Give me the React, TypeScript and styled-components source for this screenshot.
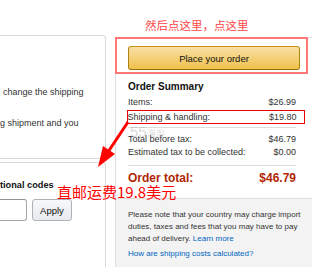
import React from "react";
import styled, { createGlobalStyle } from "styled-components";

const Global = createGlobalStyle`
  html, body { margin: 0; padding: 0; background: #fff; }
  body {
    width: 312px;
    height: 267px;
    overflow: hidden;
    font-family: "Liberation Sans", Arial, sans-serif;
    color: #111;
  }
  #root { width: 312px; height: 267px; }
`;

const Page = styled.div`
  position: relative;
  width: 312px;
  height: 267px;
  overflow: hidden;
  background: #fff;
`;

const TopNote = styled.div`
  height: 35px;
  box-sizing: border-box;
  padding: 17px 0 0 145px;
  font-family: "Noto Sans CJK SC", sans-serif;
  font-size: 11.5px;
  line-height: 16px;
  color: #f44;
  white-space: nowrap;
`;

const Columns = styled.div`
  display: flex;
  align-items: flex-start;
  gap: 9px;
`;

const LeftCol = styled.div`
  width: 106px;
  flex: none;
  display: flex;
  flex-direction: column;
  gap: 3px;
`;

const Panel = styled.div<{ $open?: boolean }>`
  box-sizing: border-box;
  border: 1px solid #d5dbdb;
  border-left: none;
  border-radius: ${(p) => (p.$open ? "0 4px 0 0" : "0 4px 4px 0")};
  ${(p) => (p.$open ? "border-bottom: none;" : "")}
  font-size: 9px;
  color: #333;
  white-space: nowrap;
  overflow: hidden;
`;

const InfoPanel = styled(Panel)`
  height: 124px;
  padding-top: 49px;
`;

const Para = styled.p<{ $indent?: number }>`
  margin: 0 0 16px;
  padding-left: ${(p) => p.$indent ?? 0}px;
  line-height: 15px;
`;

const CodePanel = styled(Panel)`
  height: 120px;
  padding-top: 16px;
`;

const Label = styled.div`
  font-weight: bold;
  font-size: 9.2px;
  line-height: 12px;
  color: #111;
`;

const CodeRow = styled.div`
  display: flex;
  gap: 5px;
  margin-top: 8px;
`;

const CodeInput = styled.div`
  width: 27px;
  height: 22px;
  box-sizing: border-box;
  border: 1px solid #a6a6a6;
  border-top-color: #949494;
  border-left: none;
  border-radius: 0 3px 3px 0;
  background: #fff;
`;

const ApplyButton = styled.button`
  width: 40px;
  height: 22px;
  box-sizing: border-box;
  padding: 0;
  border: 1px solid #adb1b8;
  border-radius: 3px;
  background: linear-gradient(#f7f8fa, #e7e9ec);
  font-family: "Liberation Sans", Arial, sans-serif;
  font-size: 9.5px;
  color: #111;
`;

const RightCol = styled.div`
  width: 205px;
  flex: none;
  margin-top: 2px;
  box-sizing: border-box;
  border: 1px solid #ddd;
  border-right: none;
  border-bottom: none;
  border-radius: 4px 0 0 0;
`;

const ButtonBox = styled.div`
  margin: -1px 0 0 -1px;
  width: 193px;
  box-sizing: border-box;
  border: 2px solid #f77;
  padding: 7px 0 2px 11px;
`;

const PlaceButton = styled.button`
  display: block;
  width: 172px;
  height: 24px;
  box-sizing: border-box;
  border: 1px solid;
  border-color: #c89411 #b0820f #99710d;
  border-radius: 3px;
  background: linear-gradient(#f7dfa5, #f0c14b);
  font-family: "Liberation Sans", Arial, sans-serif;
  font-size: 9.5px;
  color: #111;
  padding: 0;
`;

const Summary = styled.div`
  width: 168px;
  padding: 6px 0 12px 12px;
`;

const Title = styled.div`
  font-weight: bold;
  font-size: 10px;
  line-height: 14px;
  color: #111;
  margin-bottom: 2px;
`;

const Row = styled.div<{ $boxed?: boolean }>`
  display: flex;
  justify-content: space-between;
  font-size: 9px;
  line-height: ${(p) => (p.$boxed ? "12px" : "13px")};
  color: #333;
  white-space: nowrap;
  ${(p) =>
    p.$boxed
      ? `
    border: 1.5px solid #e00;
    margin: 1px -9px 0 -1.5px;
    padding: 0 7.5px 0 0;
  `
      : ""}
`;

const Divider = styled.div<{ $top: number; $bottom: number }>`
  height: 1px;
  background: #ddd;
  margin: ${(p) => p.$top}px 0 ${(p) => p.$bottom}px;
`;

const TotalRow = styled.div`
  display: flex;
  justify-content: space-between;
  font-weight: bold;
  font-size: 12px;
  line-height: 16px;
  color: #b12704;
`;

const NoteBand = styled.div`
  background: #f3f3f3;
  border-top: 1px solid #ddd;
  padding: 10px 0 12px 12px;
  font-size: 8px;
  line-height: 12px;
  color: #333;
  white-space: nowrap;
`;

const Link = styled.span`
  color: #0066c0;
`;

const LinkLine = styled.div`
  margin-top: 3px;
  color: #0066c0;
`;

const Watermark = styled.div`
  position: absolute;
  left: 130px;
  top: 124px;
  display: flex;
  align-items: baseline;
  font-family: "Noto Sans CJK SC", sans-serif;
  line-height: 16px;
  color: rgba(160, 160, 160, 0.4);
  pointer-events: none;
`;

const WatermarkNum = styled.span`
  font-family: "Liberation Sans", Arial, sans-serif;
  font-size: 15px;
`;

const WatermarkText = styled.span`
  font-size: 9px;
`;

const Callout = styled.div`
  position: absolute;
  left: 57px;
  top: 183px;
  font-family: "Noto Sans CJK SC", sans-serif;
  font-size: 15px;
  line-height: 17px;
  color: #f00;
  white-space: nowrap;
  pointer-events: none;
`;

const ArrowLayer = styled.svg`
  position: absolute;
  left: 0;
  top: 0;
  pointer-events: none;
`;

export default function App() {
  return (
    <Page>
      <Global />
      <TopNote>然后点这里，点这里</TopNote>
      <Columns>
        <LeftCol>
          <InfoPanel>
            <Para $indent={3}>change the shipping</Para>
            <Para>g shipment and you</Para>
          </InfoPanel>
          <CodePanel $open>
            <Label>tional codes</Label>
            <CodeRow>
              <CodeInput />
              <ApplyButton>Apply</ApplyButton>
            </CodeRow>
          </CodePanel>
        </LeftCol>
        <RightCol>
          <ButtonBox>
            <PlaceButton>Place your order</PlaceButton>
          </ButtonBox>
          <Summary>
            <Title>Order Summary</Title>
            <Row>
              <span>Items:</span>
              <span>$26.99</span>
            </Row>
            <Row $boxed>
              <span>Shipping &amp; handling:</span>
              <span>$19.80</span>
            </Row>
            <Divider $top={3} $bottom={5} />
            <Row>
              <span>Total before tax:</span>
              <span>$46.79</span>
            </Row>
            <Row>
              <span>Estimated tax to be collected:</span>
              <span>$0.00</span>
            </Row>
            <Divider $top={6} $bottom={4} />
            <TotalRow>
              <span>Order total:</span>
              <span>$46.79</span>
            </TotalRow>
          </Summary>
          <NoteBand>
            Please note that your country may charge import
            <br />
            duties, taxes and fees that you may have to pay
            <br />
            ahead of delivery. <Link>Learn more</Link>
            <LinkLine>How are shipping costs calculated?</LinkLine>
          </NoteBand>
        </RightCol>
      </Columns>
      <Watermark>
        <WatermarkNum>55</WatermarkNum>
        <WatermarkText>海淘</WatermarkText>
      </Watermark>
      <ArrowLayer width="312" height="267" viewBox="0 0 312 267">
        <line x1="128" y1="122" x2="108" y2="152" stroke="#f00" strokeWidth="3" />
        <polygon points="98,167 115,154 103,146" fill="#f00" />
      </ArrowLayer>
      <Callout>直邮运费19.8美元</Callout>
    </Page>
  );
}
